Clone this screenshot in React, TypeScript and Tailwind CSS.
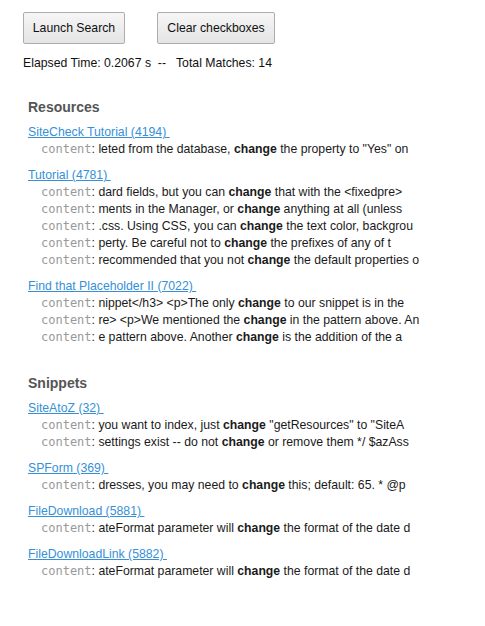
import React from "react";

type Entry = { title: string; count: number; lines: string[] };
type Section = { name: string; entries: Entry[] };

// each line holds one "change" hit; split on it to bold the match
const sections: Section[] = [
  {
    name: "Resources",
    entries: [
      { title: "SiteCheck Tutorial", count: 4194, lines: ['leted from the database, |change| the property to "Yes" on'] },
      {
        title: "Tutorial",
        count: 4781,
        lines: [
          "dard fields, but you can |change| that with the <fixedpre>",
          "ments in the Manager, or |change| anything at all (unless",
          ".css. Using CSS, you can |change| the text color, backgrou",
          "perty. Be careful not to |change| the prefixes of any of t",
          "recommended that you not |change| the default properties o",
        ],
      },
      {
        title: "Find that Placeholder II",
        count: 7022,
        lines: [
          "nippet</h3> <p>The only |change| to our snippet is in the",
          "re> <p>We mentioned the |change| in the pattern above. An",
          "e pattern above. Another |change| is the addition of the a",
        ],
      },
    ],
  },
  {
    name: "Snippets",
    entries: [
      {
        title: "SiteAtoZ",
        count: 32,
        lines: [
          'you want to index, just |change| "getResources" to "SiteA',
          "settings exist -- do not |change| or remove them */ $azAss",
        ],
      },
      { title: "SPForm", count: 369, lines: ["dresses, you may need to |change| this; default: 65. * @p"] },
      { title: "FileDownload", count: 5881, lines: ["ateFormat parameter will |change| the format of the date d"] },
      { title: "FileDownloadLink", count: 5882, lines: ["ateFormat parameter will |change| the format of the date d"] },
    ],
  },
];

function ContentLine({ text }: { text: string }) {
  const [before, hit, after] = text.split("|");
  return (
    <div className="pl-[13px] leading-[17px] whitespace-pre">
      <span className="text-[#999] text-[12px]" style={{ fontFamily: '"DejaVu Sans Mono", monospace' }}>content</span>
      <span>: {before}</span>
      <b className="font-bold">{hit}</b>
      <span>{after}</span>
    </div>
  );
}

export default function App() {
  return (
    <div className="min-h-[626px] bg-white pt-3 pl-[23px] text-[12.25px] text-[#1a1a1a]" style={{ fontFamily: '"Liberation Sans", Arial, sans-serif' }}>
      {/* Toolbar */}
      <div className="flex gap-8">
        <button className="w-[102px] h-[32px] rounded-[2px] border border-[#adadad] bg-gradient-to-b from-[#f6f6f6] to-[#e4e4e4] text-[12.25px] text-[#111]">
          Launch Search
        </button>
        <button className="w-[118px] h-[32px] rounded-[2px] border border-[#adadad] bg-gradient-to-b from-[#f6f6f6] to-[#e4e4e4] text-[12.25px] text-[#111]">
          Clear checkboxes
        </button>
      </div>
      <div className="mt-[11px] leading-[17px] whitespace-pre text-[#111]">Elapsed Time: 0.2067 s  --   Total Matches: 14</div>

      {/* Results */}
      <div className="pl-[5px] mt-[27px] flex flex-col gap-[29px]">
        {sections.map(sec => (
          <div key={sec.name}>
            <h3 className="text-[14px] font-bold leading-[17px] text-[#555] mb-[8px]">{sec.name}</h3>
            <div className="flex flex-col gap-[9px]">
              {sec.entries.map(e => (
                <div key={e.title}>
                  <div className="leading-[17px]">
                    <a href="#" className="text-[#3590d8] underline whitespace-pre">{`${e.title} (${e.count}) `}</a>
                  </div>
                  {e.lines.map((l, i) => <ContentLine key={i} text={l} />)}
                </div>
              ))}
            </div>
          </div>
        ))}
      </div>
    </div>
  );
}
